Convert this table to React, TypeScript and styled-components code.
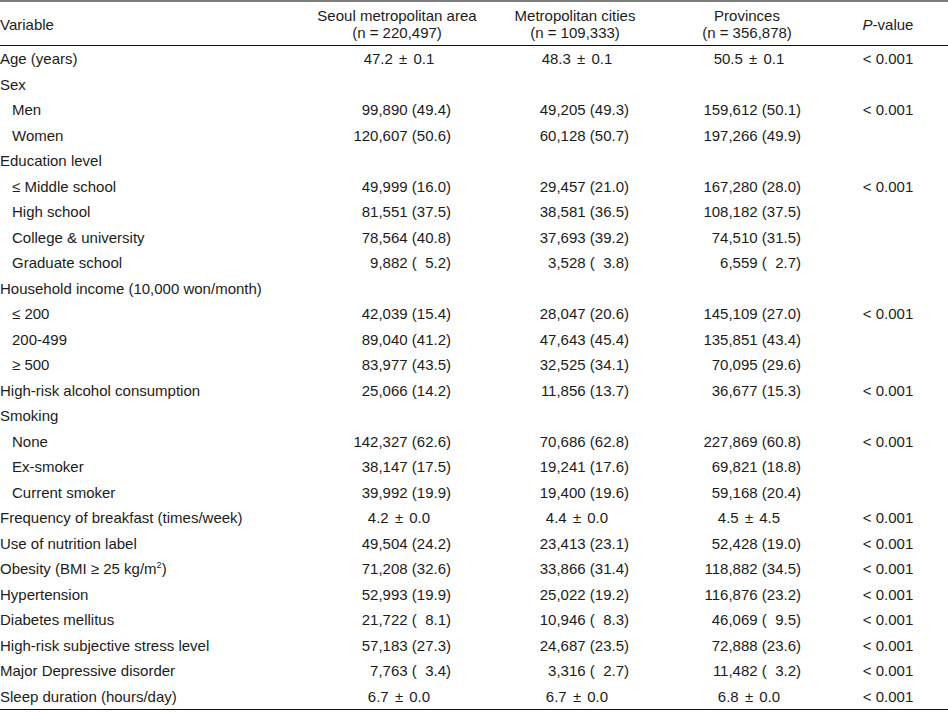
import React from "react";
import styled, { createGlobalStyle } from "styled-components";

const Global = createGlobalStyle`
  html, body { margin: 0; padding: 0; background: #fff; }
  body { font-family: "Liberation Sans", Arial, sans-serif; color: #1c1c1c; }
`;

const COLS = "310px 174px 182px 162px 120px";

const Table = styled.div`
  width: 948px;
  border-top: 2px solid #7d7d7d;
  border-bottom: 1.5px solid #111;
  font-size: 15px;
`;

const HeaderRow = styled.div`
  display: grid;
  grid-template-columns: ${COLS};
  height: 43px;
  align-items: center;
  border-bottom: 1.8px solid #111;
  line-height: 17px;
`;

const HeadCell = styled.div<{ $left?: boolean }>`
  text-align: ${(p) => (p.$left ? "left" : "center")};
  white-space: nowrap;
  padding-top: 1px;
`;

const Row = styled.div`
  display: grid;
  grid-template-columns: ${COLS};
  height: 25.5px;
  align-items: center;
  white-space: pre;
`;

const Label = styled.div<{ $indent?: boolean }>`
  padding-left: ${(p) => (p.$indent ? "12px" : "0")};
`;

const Cell = styled.div`
  display: flex;
  justify-content: center;
`;

const Value = styled.span<{ $mean?: boolean }>`
  width: 108px;
  text-align: ${(p) => (p.$mean ? "center" : "right")};
  padding-left: ${(p) => (p.$mean ? "4px" : "0")};
`;

const Pm = styled.span`
  padding: 0 2px;
`;

const PVal = styled.div`
  text-align: center;
`;

type R = { label: string; indent?: boolean; v?: [string, string, string]; mean?: boolean; p?: string };

const F = "\u2007";

const rows: R[] = [
  { label: "Age (years)", v: ["47.2 ± 0.1", "48.3 ± 0.1", "50.5 ± 0.1"], mean: true, p: "< 0.001" },
  { label: "Sex" },
  { label: "Men", indent: true, v: ["99,890 (49.4)", "49,205 (49.3)", "159,612 (50.1)"], p: "< 0.001" },
  { label: "Women", indent: true, v: ["120,607 (50.6)", "60,128 (50.7)", "197,266 (49.9)"] },
  { label: "Education level" },
  { label: "≤ Middle school", indent: true, v: ["49,999 (16.0)", "29,457 (21.0)", "167,280 (28.0)"], p: "< 0.001" },
  { label: "High school", indent: true, v: ["81,551 (37.5)", "38,581 (36.5)", "108,182 (37.5)"] },
  { label: "College & university", indent: true, v: ["78,564 (40.8)", "37,693 (39.2)", "74,510 (31.5)"] },
  { label: "Graduate school", indent: true, v: [`9,882 (${F}5.2)`, `3,528 (${F}3.8)`, `6,559 (${F}2.7)`] },
  { label: "Household income (10,000 won/month)" },
  { label: "≤ 200", indent: true, v: ["42,039 (15.4)", "28,047 (20.6)", "145,109 (27.0)"], p: "< 0.001" },
  { label: "200-499", indent: true, v: ["89,040 (41.2)", "47,643 (45.4)", "135,851 (43.4)"] },
  { label: "≥ 500", indent: true, v: ["83,977 (43.5)", "32,525 (34.1)", "70,095 (29.6)"] },
  { label: "High-risk alcohol consumption", v: ["25,066 (14.2)", "11,856 (13.7)", "36,677 (15.3)"], p: "< 0.001" },
  { label: "Smoking" },
  { label: "None", indent: true, v: ["142,327 (62.6)", "70,686 (62.8)", "227,869 (60.8)"], p: "< 0.001" },
  { label: "Ex-smoker", indent: true, v: ["38,147 (17.5)", "19,241 (17.6)", "69,821 (18.8)"] },
  { label: "Current smoker", indent: true, v: ["39,992 (19.9)", "19,400 (19.6)", "59,168 (20.4)"] },
  { label: "Frequency of breakfast (times/week)", v: ["4.2 ± 0.0", "4.4 ± 0.0", "4.5 ± 4.5"], mean: true, p: "< 0.001" },
  { label: "Use of nutrition label", v: ["49,504 (24.2)", "23,413 (23.1)", "52,428 (19.0)"], p: "< 0.001" },
  { label: "OBESITY", v: ["71,208 (32.6)", "33,866 (31.4)", "118,882 (34.5)"], p: "< 0.001" },
  { label: "Hypertension", v: ["52,993 (19.9)", "25,022 (19.2)", "116,876 (23.2)"], p: "< 0.001" },
  { label: "Diabetes mellitus", v: [`21,722 (${F}8.1)`, `10,946 (${F}8.3)`, `46,069 (${F}9.5)`], p: "< 0.001" },
  { label: "High-risk subjective stress level", v: ["57,183 (27.3)", "24,687 (23.5)", "72,888 (23.6)"], p: "< 0.001" },
  { label: "Major Depressive disorder", v: [`7,763 (${F}3.4)`, `3,316 (${F}2.7)`, `11,482 (${F}3.2)`], p: "< 0.001" },
  { label: "Sleep duration (hours/day)", v: ["6.7 ± 0.0", "6.7 ± 0.0", "6.8 ± 0.0"], mean: true, p: "< 0.001" },
];

const Sup = styled.sup`
  font-size: 9px;
  line-height: 0;
`;

function renderValue(s: string) {
  const parts = s.split(" ± ");
  if (parts.length === 2) {
    return (
      <>
        {parts[0]} <Pm>±</Pm> {parts[1]}
      </>
    );
  }
  return s;
}

export default function App() {
  return (
    <>
      <Global />
      <Table>
        <HeaderRow>
          <HeadCell $left>Variable</HeadCell>
          <HeadCell>
            Seoul metropolitan area
            <br />
            (n = 220,497)
          </HeadCell>
          <HeadCell>
            Metropolitan cities
            <br />
            (n = 109,333)
          </HeadCell>
          <HeadCell>
            Provinces
            <br />
            (n = 356,878)
          </HeadCell>
          <HeadCell>
            <i>P</i>-value
          </HeadCell>
        </HeaderRow>
        {rows.map((r, i) => (
          <Row key={i}>
            <Label $indent={r.indent}>
              {r.label === "OBESITY" ? (
                <>
                  Obesity (BMI ≥ 25 kg/m<Sup>2</Sup>)
                </>
              ) : (
                r.label
              )}
            </Label>
            {[0, 1, 2].map((k) => (
              <Cell key={k}>{r.v ? <Value $mean={r.mean}>{renderValue(r.v[k])}</Value> : null}</Cell>
            ))}
            <PVal>{r.p ?? ""}</PVal>
          </Row>
        ))}
      </Table>
    </>
  );
}
